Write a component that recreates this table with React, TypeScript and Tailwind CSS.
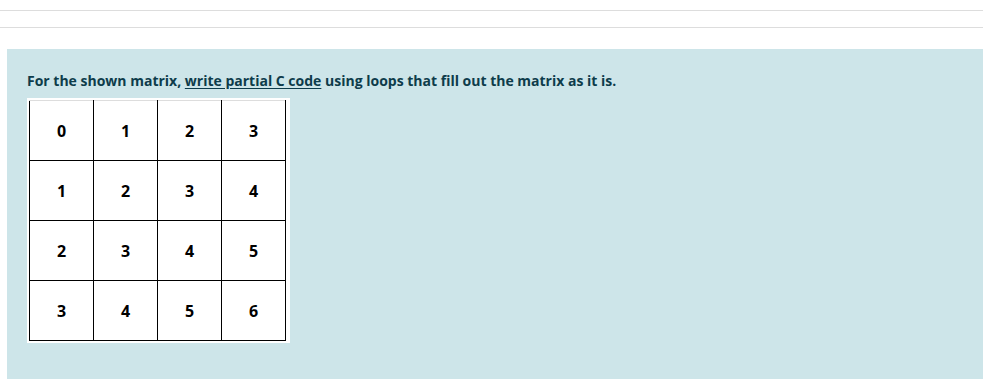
import React from "react";

const rows = [
  [0, 1, 2, 3],
  [1, 2, 3, 4],
  [2, 3, 4, 5],
  [3, 4, 5, 6],
];

export default function App() {
  return (
    <div className="w-[983px] h-[379px] overflow-hidden bg-white" style={{ fontFamily: '"Open Sans", "Noto Sans", sans-serif' }}>
      <div className="h-[11px] border-b border-[#dddddd]" />
      <div className="h-[17px] border-b border-[#dddddd]" />
      <div className="mt-[21px] ml-[7px] bg-[#cde5e9] pl-[20px] pt-[22px] pb-[40px]">
        <p className="text-[14px] leading-[20px] font-bold text-[#0d3c4b]">
          For the shown matrix, <span className="underline underline-offset-2">write partial C code</span> using loops that fill out the matrix as it is.
        </p>
        <div className="mt-[7px] inline-block bg-white pl-[2px] pr-[4px] pt-[2px] pb-[2px]">
          <table className="border-collapse">
            <tbody>
              {rows.map((r, i) => (
                <tr key={i}>
                  {r.map((v, j) => (
                    <td
                      key={j}
                      className={`w-[64px] h-[60px] p-0 text-center align-middle text-[16px] font-bold text-black border border-black ${i === 0 ? "border-t-[#dddddd]" : ""}`}
                    >
                      {v}
                    </td>
                  ))}
                </tr>
              ))}
            </tbody>
          </table>
        </div>
      </div>
    </div>
  );
}
